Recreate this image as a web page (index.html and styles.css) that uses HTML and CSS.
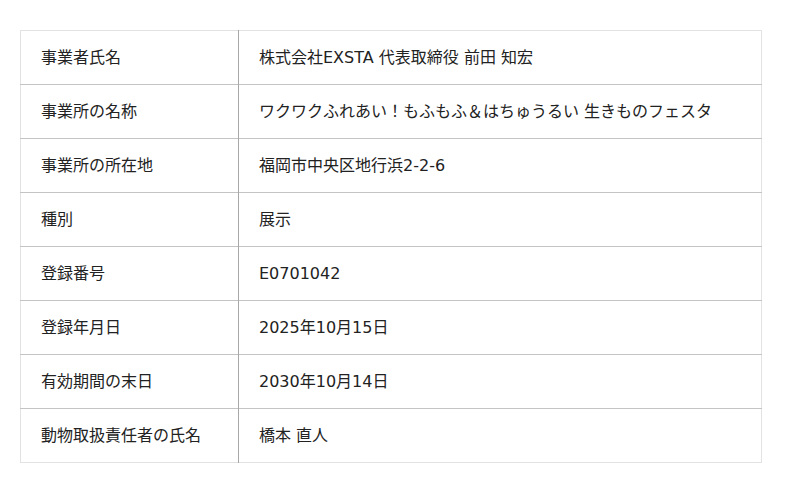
FILE: index.html
```html
<!DOCTYPE html>
<html lang="ja">
<head>
<meta charset="utf-8">
<link rel="stylesheet" href="styles.css">
</head>
<body>
<div class="wrap">
<table class="info">
<tbody>
<tr><th>事業者氏名</th><td>株式会社EXSTA 代表取締役 前田 知宏</td></tr>
<tr><th>事業所の名称</th><td>ワクワクふれあい！もふもふ＆はちゅうるい 生きものフェスタ</td></tr>
<tr><th>事業所の所在地</th><td>福岡市中央区地行浜2-2-6</td></tr>
<tr><th>種別</th><td>展示</td></tr>
<tr><th>登録番号</th><td>E0701042</td></tr>
<tr><th>登録年月日</th><td>2025年10月15日</td></tr>
<tr><th>有効期間の末日</th><td>2030年10月14日</td></tr>
<tr><th>動物取扱責任者の氏名</th><td>橋本 直人</td></tr>
</tbody>
</table>
</div>
</body>
</html>
```
FILE: styles.css
```css
html, body {
  margin: 0;
  padding: 0;
  background: #fff;
}
.wrap {
  padding: 30px 38px 0 20px;
}
.info {
  width: 742px;
  border-collapse: collapse;
  border: 1px solid #e2e2e2;
  font-family: "DejaVu Sans", "Noto Sans CJK JP", sans-serif;
  font-size: 16px;
  line-height: 20px;
  color: #222;
}
.info tr {
  height: 54px;
}
.info tr + tr th,
.info tr + tr td {
  border-top: 1px solid #c4c4c4;
}
.info th,
.info td {
  height: 53px;
  box-sizing: border-box;
  padding: 17px 0 16px 20px;
  vertical-align: top;
}
.info th {
  width: 218px;
  text-align: left;
  font-weight: normal;
  border-right: 1px solid #a8a8a8;
}
```
